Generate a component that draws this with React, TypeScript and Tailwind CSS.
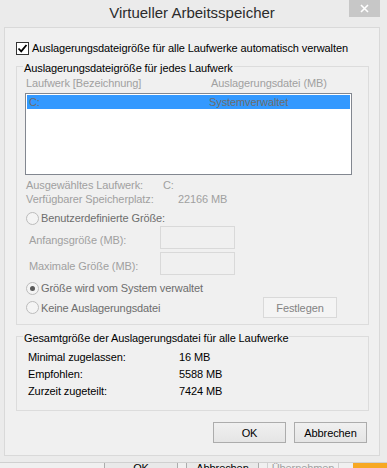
import React from 'react';

const font = "font-['Liberation_Sans',Arial,sans-serif]";

const CheckBox = () => (
  <span className="w-[13px] h-[13px] border border-[#333] bg-white flex items-center justify-center shrink-0">
    <svg width="11" height="11" viewBox="0 0 11 11">
      <path d="M1.5 5.5 L4.2 8.3 L9.5 2" fill="none" stroke="#000" strokeWidth="1.8" />
    </svg>
  </span>
);

const Radio = ({ checked = false }: { checked?: boolean }) => (
  <span className="w-[13px] h-[13px] rounded-full border border-[#bcbcbc] bg-[#f4f4f4] flex items-center justify-center shrink-0">
    {checked && <span className="w-[5px] h-[5px] rounded-full bg-[#5a5a5a]" />}
  </span>
);

// group box with caption sitting on the top border
const Group = ({ title, className, children }: { title: string; className: string; children: React.ReactNode }) => (
  <div className={`relative border border-[#dcdcdc] ml-[11px] w-[353px] ${className}`}>
    <span className="absolute left-[6px] -top-[6px] px-[1px] leading-[14px] bg-[#f0f0f0] text-black">{title}</span>
    {children}
  </div>
);

const Btn = ({ label, className = '' }: { label: string; className?: string }) => (
  <button
    type="button"
    className={`h-[21px] border border-[#acacac] bg-gradient-to-b from-[#f0f0f0] to-[#e5e5e5] text-black text-[11px] leading-[14px] ${className}`}
  >
    {label}
  </button>
);

export default function App() {
  return (
    <div className={`w-[387px] h-[468px] bg-[#ebebeb] flex flex-col overflow-hidden relative text-[11px] tracking-[-0.1px] ${font}`}>
      {/* title bar */}
      <div className="h-[27px] flex items-center justify-center pb-[2px] pr-[3px]">
        <span className="text-[15px] leading-[18px] tracking-normal text-[#2b2b2b]">Virtueller Arbeitsspeicher</span>
      </div>
      <div className="absolute top-0 right-[7px] w-[31px] h-[17px] bg-[#c7c7c7] flex items-center justify-center">
        <svg width="9" height="9" viewBox="0 0 9 9">
          <path d="M1 1 L8 8 M8 1 L1 8" stroke="#fff" strokeWidth="1.6" />
        </svg>
      </div>

      {/* client area */}
      <div className="ml-[4px] mr-[7px] h-[429px] border border-[#d9d9d9] bg-[#f0f0f0] flex flex-col">
        <div className="mt-[13px] ml-[11px] h-[14px] flex items-center">
          <CheckBox />
          <span className="ml-[3px] leading-[14px] text-black">
            Auslagerungsdateigröße für alle Laufwerke automatisch verwalten
          </span>
        </div>

        <Group title="Auslagerungsdateigröße für jedes Laufwerk" className="mt-[11px] h-[259px]">
          <div className="flex flex-col">
            <div className="mt-[9px] ml-[9px] h-[14px] flex leading-[14px] text-[#a0a0a0]">
              <span className="w-[185px]">Laufwerk [Bezeichnung]</span>
              <span>Auslagerungsdatei (MB)</span>
            </div>
            <div className="mt-[3px] ml-[8px] w-[327px] h-[82px] border border-[#828790] bg-white p-[1px]">
              <div className="h-[14px] bg-[#3399ff] flex leading-[14px] text-[#6d6d6d] pl-[2px]">
                <span className="w-[180px]">C:</span>
                <span>Systemverwaltet</span>
              </div>
            </div>

            <div className="mt-[3px] ml-[9px] h-[14px] flex leading-[14px] text-[#a0a0a0]">
              <span className="w-[137px]">Ausgewähltes Laufwerk:</span>
              <span>C:</span>
            </div>
            <div className="ml-[9px] h-[14px] flex leading-[14px] text-[#a0a0a0]">
              <span className="w-[152px]">Verfügbarer Speicherplatz:</span>
              <span>22166 MB</span>
            </div>

            <div className="mt-[5px] ml-[9px] h-[14px] flex items-center text-[#6d6d6d]">
              <Radio />
              <span className="ml-[2px] leading-[14px]">Benutzerdefinierte Größe:</span>
            </div>

            <div className="mt-[1px] ml-[12px] h-[23px] flex items-center text-[#a0a0a0]">
              <span className="w-[131px] mt-[4px] leading-[14px]">Anfangsgröße (MB):</span>
              <div className="w-[75px] h-[23px] border border-[#d9d9d9] bg-[#f0f0f0]" />
            </div>
            <div className="mt-[3px] ml-[12px] h-[23px] flex items-center text-[#a0a0a0]">
              <span className="w-[131px] mt-[4px] leading-[14px]">Maximale Größe (MB):</span>
              <div className="w-[75px] h-[23px] border border-[#d9d9d9] bg-[#f0f0f0]" />
            </div>

            <div className="mt-[6px] ml-[9px] h-[14px] flex items-center text-[#6d6d6d]">
              <Radio checked />
              <span className="ml-[2px] leading-[14px]">Größe wird vom System verwaltet</span>
            </div>
            <div className="mt-[2px] ml-[9px] mr-[31px] h-[21px] flex items-center text-[#6d6d6d]">
              <Radio />
              <span className="ml-[2px] leading-[14px]">Keine Auslagerungsdatei</span>
              <button
                type="button"
                className="ml-auto w-[74px] h-[21px] border border-[#d9d9d9] bg-[#f4f4f4] text-[#838383] text-[11px] leading-[14px]"
              >
                Festlegen
              </button>
            </div>
          </div>
        </Group>

        <Group title="Gesamtgröße der Auslagerungsdatei für alle Laufwerke" className="mt-[11px] h-[75px]">
          <div className="pt-[12px] pl-[11px] flex flex-col text-black leading-[17px]">
            <div className="h-[17px] flex">
              <span className="w-[151px]">Minimal zugelassen:</span>
              <span>16 MB</span>
            </div>
            <div className="h-[17px] flex">
              <span className="w-[151px]">Empfohlen:</span>
              <span>5588 MB</span>
            </div>
            <div className="h-[17px] flex">
              <span className="w-[151px]">Zurzeit zugeteilt:</span>
              <span>7424 MB</span>
            </div>
          </div>
        </Group>

        <div className="mt-[11px] mr-[12px] flex justify-end gap-[8px]">
          <Btn label="OK" className="w-[73px]" />
          <Btn label="Abbrechen" className="w-[73px]" />
        </div>
      </div>

      {/* parent dialog peeking out below */}
      <div className="mt-[6px] flex-1 border-t border-[#d0d0d0] bg-[#f0f0f0] flex overflow-hidden">
        <div className="ml-[104px] w-[74px] h-[21px] border-x border-[#acacac] bg-[#e9e9e9] flex justify-center">
          <span className="-mt-[2px] leading-[14px] text-black">OK</span>
        </div>
        <div className="ml-[8px] w-[73px] h-[21px] border-x border-[#acacac] bg-[#e9e9e9] flex justify-center">
          <span className="-mt-[2px] leading-[14px] text-black">Abbrechen</span>
        </div>
        <div className="ml-[8px] w-[72px] h-[21px] border-x border-[#d0d0d0] bg-[#f0f0f0] flex justify-center">
          <span className="-mt-[2px] leading-[14px] text-[#a0a0a0]">Übernehmen</span>
        </div>
        <div className="ml-[14px] w-[34px] h-[21px] bg-[#f7a823]" />
      </div>
    </div>
  );
}
